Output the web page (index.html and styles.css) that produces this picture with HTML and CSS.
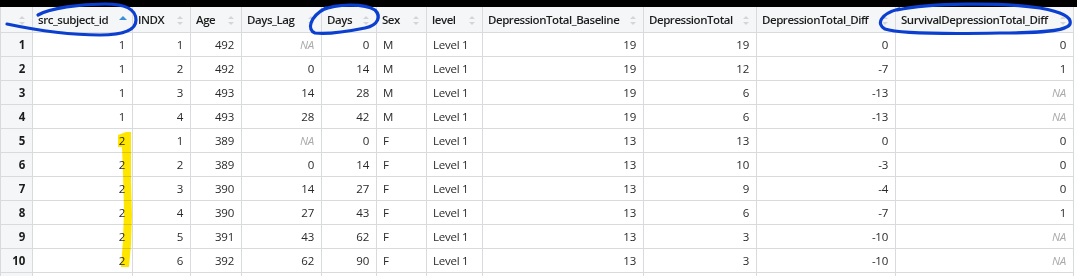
FILE: index.html
```html
<!DOCTYPE html>
<html>
<head>
<meta charset="utf-8">
<link rel="stylesheet" href="styles.css">
</head>
<body>
<div class="page">
  <div class="topbar"></div>
  <table class="grid">
    <colgroup>
      <col class="c-rn"><col class="c-src"><col class="c-indx"><col class="c-age"><col class="c-lag"><col class="c-days"><col class="c-sex"><col class="c-level"><col class="c-base"><col class="c-tot"><col class="c-diff"><col class="c-surv">
    </colgroup>
    <thead>
      <tr>
        <th class="rn-h"><span class="sort"></span></th>
        <th>src_subject_id<span class="sort asc"></span></th>
        <th>INDX<span class="sort"></span></th>
        <th>Age<span class="sort"></span></th>
        <th>Days_Lag<span class="sort"></span></th>
        <th>Days<span class="sort"></span></th>
        <th>Sex<span class="sort"></span></th>
        <th>level<span class="sort"></span></th>
        <th>DepressionTotal_Baseline<span class="sort"></span></th>
        <th>DepressionTotal<span class="sort"></span></th>
        <th>DepressionTotal_Diff<span class="sort"></span></th>
        <th>SurvivalDepressionTotal_Diff<span class="sort"></span></th>
      </tr>
    </thead>
    <tbody>
      <tr><td class="rn">1</td><td>1</td><td>1</td><td>492</td><td class="na">NA</td><td>0</td><td class="l">M</td><td class="l">Level 1</td><td>19</td><td>19</td><td>0</td><td>0</td></tr>
      <tr><td class="rn">2</td><td>1</td><td>2</td><td>492</td><td>0</td><td>14</td><td class="l">M</td><td class="l">Level 1</td><td>19</td><td>12</td><td>-7</td><td>1</td></tr>
      <tr><td class="rn">3</td><td>1</td><td>3</td><td>493</td><td>14</td><td>28</td><td class="l">M</td><td class="l">Level 1</td><td>19</td><td>6</td><td>-13</td><td class="na">NA</td></tr>
      <tr><td class="rn">4</td><td>1</td><td>4</td><td>493</td><td>28</td><td>42</td><td class="l">M</td><td class="l">Level 1</td><td>19</td><td>6</td><td>-13</td><td class="na">NA</td></tr>
      <tr><td class="rn">5</td><td>2</td><td>1</td><td>389</td><td class="na">NA</td><td>0</td><td class="l">F</td><td class="l">Level 1</td><td>13</td><td>13</td><td>0</td><td>0</td></tr>
      <tr><td class="rn">6</td><td>2</td><td>2</td><td>389</td><td>0</td><td>14</td><td class="l">F</td><td class="l">Level 1</td><td>13</td><td>10</td><td>-3</td><td>0</td></tr>
      <tr><td class="rn">7</td><td>2</td><td>3</td><td>390</td><td>14</td><td>27</td><td class="l">F</td><td class="l">Level 1</td><td>13</td><td>9</td><td>-4</td><td>0</td></tr>
      <tr><td class="rn">8</td><td>2</td><td>4</td><td>390</td><td>27</td><td>43</td><td class="l">F</td><td class="l">Level 1</td><td>13</td><td>6</td><td>-7</td><td>1</td></tr>
      <tr><td class="rn">9</td><td>2</td><td>5</td><td>391</td><td>43</td><td>62</td><td class="l">F</td><td class="l">Level 1</td><td>13</td><td>3</td><td>-10</td><td class="na">NA</td></tr>
      <tr><td class="rn">10</td><td>2</td><td>6</td><td>392</td><td>62</td><td>90</td><td class="l">F</td><td class="l">Level 1</td><td>13</td><td>3</td><td>-10</td><td class="na">NA</td></tr>
      <tr class="partial"><td class="rn"></td><td></td><td></td><td></td><td></td><td></td><td></td><td></td><td></td><td></td><td></td><td></td></tr>
    </tbody>
  </table>
  <svg class="ink" width="1077" height="276" viewBox="0 0 1077 276">
    <path class="hl" d="M118,135 L126,132 L131,132 L131,180 L132,215 L131,245 L129,267 L121,267 L123,240 L124,210 L123,175 L122,147 L118,147 Z"/>
    <path class="pen" d="M38,15 C50,8 80,4 105,4 C125,4 136,9 136,20 C136,30 125,35 100,35 C70,35 40,31 7,24"/>
    <path class="pen" d="M322,10 C336,4 364,3 375,10 C381,16 379,25 365,28 C350,31 330,35 315,33 C307,30 309,17 326,8"/>
    <path class="pen" d="M897,10 C930,3 1000,2 1040,8 C1062,12 1072,17 1070,24 C1067,31 1040,33 1000,33 C950,34 900,34 885,29 C876,24 880,14 899,9"/>
  </svg>
</div>
</body>
</html>
```

FILE: styles.css
```css
html, body {
  margin: 0;
  padding: 0;
  background: #ffffff;
}

.page {
  position: relative;
  width: 1077px;
  height: 276px;
  overflow: hidden;
  font-family: "Open Sans", "Noto Sans", sans-serif;
  font-size: 11.5px;
  color: #222;
}

.topbar {
  height: 7px;
  background: #000;
}

.grid {
  border-collapse: collapse;
  table-layout: fixed;
  width: 1073px;
}

.c-rn { width: 32px; }
.c-src { width: 100px; }
.c-indx { width: 58px; }
.c-age { width: 51px; }
.c-lag { width: 80px; }
.c-days { width: 55px; }
.c-sex { width: 50px; }
.c-level { width: 56px; }
.c-base { width: 161px; }
.c-tot { width: 113px; }
.c-diff { width: 139px; }
.c-surv { width: 178px; }

.grid th {
  position: relative;
  height: 25px;
  padding: 0 18px 0 5px;
  background: #f4f6f8;
  border: 1px solid #d9dadc;
  border-top: none;
  text-align: left;
  font-weight: 600;
  letter-spacing: -0.45px;
  color: #1c1c1c;
  white-space: nowrap;
  overflow: hidden;
}

.grid td {
  height: 23px;
  padding: 0 7px 0 6px;
  border: 1px solid #d9dadc;
  text-align: right;
  white-space: nowrap;
  letter-spacing: -0.25px;
  color: #2a2a2a;
}

.grid td.l {
  text-align: left;
}

.grid td.na {
  color: #a9a9a9;
  font-style: italic;
}

.grid td.rn {
  background: #f4f6f8;
  font-weight: 700;
  color: #1c1c1c;
  padding-right: 7px;
}

.grid th.rn-h {
  padding: 0;
}

.sort {
  position: absolute;
  right: 6px;
  top: 9px;
  width: 7px;
  height: 9px;
}

.rn-h .sort {
  right: 6px;
}

.sort::before,
.sort::after {
  content: "";
  position: absolute;
  left: 0;
  border-left: 3.5px solid transparent;
  border-right: 3.5px solid transparent;
}

.sort::before {
  top: 0;
  border-bottom: 3.5px solid #d3d5d8;
}

.sort::after {
  bottom: 0;
  border-top: 3.5px solid #d3d5d8;
}

.sort.asc::before {
  border-bottom: 4.5px solid #3a8fd8;
  border-left-width: 4px;
  border-right-width: 4px;
}

.sort.asc::after {
  display: none;
}

.partial td {
  height: 10px;
}

.ink {
  position: absolute;
  left: 0;
  top: 0;
  pointer-events: none;
}

.ink .pen {
  fill: none;
  stroke: #0b3fd0;
  stroke-width: 3.2;
  stroke-linecap: round;
  stroke-linejoin: round;
}

.ink .hl {
  fill: #ffe600;
  mix-blend-mode: multiply;
}
```
